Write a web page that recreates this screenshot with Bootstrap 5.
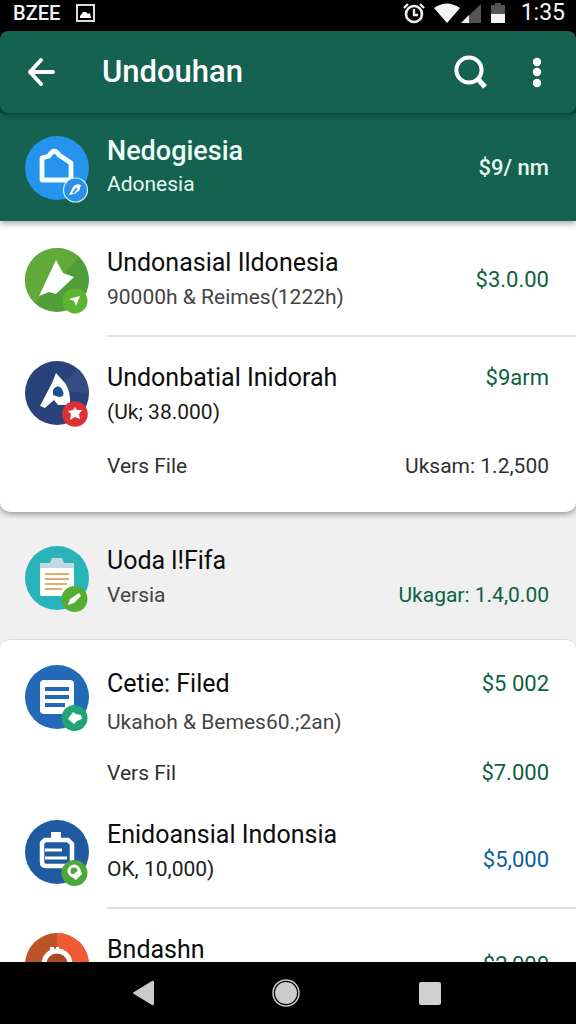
<!DOCTYPE html>
<html lang="id">
<head>
<meta charset="utf-8">
<meta name="viewport" content="width=device-width, initial-scale=1">
<title>Undouhan</title>
<link href="https://cdn.jsdelivr.net/npm/bootstrap@5.3.0/dist/css/bootstrap.min.css" rel="stylesheet">
<script src="https://cdn.jsdelivr.net/npm/bootstrap@5.3.0/dist/js/bootstrap.bundle.min.js" defer></script>
<style>
  body { font-family: Roboto, "Liberation Sans", sans-serif; background: #f0f0f0; color: #0c0c0c; }
  svg { display: block; flex: none; overflow: visible; }
  .screen { height: 100vh; }
  .status-strip { height: 31px; background: #000; color: #f4f4f4; padding: 0 11px 6px 13px; }
  .status-name { font-size: 20px; line-height: 24px; font-weight: 500; }
  .status-time { font-size: 23px; line-height: 24px; }
  .bar-back { background: linear-gradient(#000 50%, #0e4f3f 50%); }
  .app-bar { height: 82px; background: #14624f; border-radius: 8px; color: #fff; padding: 0 23px 0 24px; box-shadow: 0 2px 6px rgba(0, 0, 0, .4); }
  .app-title { font-size: 31px; line-height: 40px; font-weight: 500; margin-left: 44px; }
  .icon-btn { background: none; border: 0; padding: 0; color: #fff; }
  .entry { padding: 25px 27px 21px 25px; gap: 18px; }
  .entry-avatar { width: 64px; height: 64px; }
  .entry-title { font-size: 25px; line-height: 34px; font-weight: 400; margin: 0; }
  .entry-sub { font-size: 21px; line-height: 34px; margin: 0; color: #444; }
  .entry-sub.dark { color: #1c1c1c; }
  .amount { font-size: 22px; line-height: 34px; color: #0b6242; white-space: nowrap; }
  .meta { font-size: 21px; }
  .hero { background: #14624f; color: #effff9; box-shadow: 0 2px 7px rgba(0, 0, 0, .4); z-index: 1; padding-top: 22px; padding-bottom: 20px; }
  .hero .entry-title { font-size: 27px; font-weight: 500; line-height: 32px; }
  .hero .entry-sub, .hero .amount { color: #e4f8f1; }
  .hero .amount { font-weight: 500; }
  .detail { padding: 0 27px 0 107px; font-size: 21px; line-height: 34px; color: #303030; }
  .panel { background: #fff; }
  .panel-a { border-radius: 0 0 10px 10px; box-shadow: 0 2px 6px rgba(0, 0, 0, .4); padding-bottom: 29px; }
  .panel-b { border-radius: 10px 10px 0 0; border-top: 1px solid #d8d8d8; }
  .entry-led { padding-top: 24px; padding-bottom: 20px; }
  .entry-loose { padding-top: 32px; padding-bottom: 27px; }
  .entry-roomy { padding-bottom: 15px; }
  .entry-roomy .entry-title, .entry-roomy .entry-sub, .entry-roomy .amount { line-height: 38px; }
  .entry-after { padding-top: 28px; }
  .split { height: 2px; background: #dfe1e3; margin-left: 107px; }
  .amount.blue { color: #0a6299; }
  .nav-strip { height: 62px; background: #000; padding: 0 132px; }
</style>
</head>
<body>
<div class="screen d-flex flex-column overflow-hidden">
  <div class="status-strip d-flex align-items-center flex-shrink-0">
    <span class="status-name">BZEE</span>
    <svg class="ms-3" width="19" height="18" viewBox="0 0 19 18" aria-hidden="true"><rect x="1" y="1" width="17" height="16" fill="none" stroke="#ddd" stroke-width="2"/><path d="M4 14V12L7 8H10L12 10L14 9L15 14Z" fill="#fff"/></svg>
    <svg class="ms-auto me-3" width="102" height="24" viewBox="0 0 102 24" aria-hidden="true">
      <circle cx="11" cy="13" r="8" fill="none" stroke="#eee" stroke-width="2.6"/><path d="M1 7L5 3M17 3L21 7" stroke="#eee" stroke-width="2.4"/><path d="M11 8V14H15" fill="none" stroke="#eee" stroke-width="2.4"/>
      <path d="M31 7Q44 -2 57 7L44 22Z" fill="#f4f4f4"/>
      <path d="M78 3V22H58Z" fill="#555"/><path d="M66 14V22H58Z" fill="#f4f4f4"/>
      <path d="M88 4H92V2H98V4H102V13H88Z" fill="#555"/><path d="M88 13H102V22H88Z" fill="#f4f4f4"/>
    </svg>
    <time class="status-time">1:35</time>
  </div>

  <div class="bar-back flex-shrink-0 position-relative z-2">
    <header class="app-bar d-flex align-items-center">
      <button class="icon-btn" aria-label="Kembali"><svg width="34" height="30" viewBox="0 0 34 30" fill="none" stroke="currentColor" stroke-width="4" stroke-linecap="round" stroke-linejoin="round"><path d="M17 3L6 15L17 27M6 15H29"/></svg></button>
      <h1 class="app-title mb-0">Undouhan</h1>
      <button class="icon-btn ms-auto" aria-label="Cari"><svg width="36" height="36" viewBox="0 0 36 36" fill="none" stroke="currentColor"><circle cx="16" cy="16" r="12.6" stroke-width="4"/><path d="M24.5 24.5L32 33" stroke-width="5"/></svg></button>
      <button class="icon-btn ms-4" aria-label="Menu"><svg class="ms-2" width="32" height="32" viewBox="0 0 32 32" fill="currentColor"><circle cx="16" cy="6" r="4.2"/><circle cx="16" cy="16" r="4.2"/><circle cx="16" cy="27" r="4.2"/></svg></button>
    </header>
  </div>

  <main class="flex-fill overflow-hidden">
    <section class="entry hero d-flex align-items-center position-relative">
      <svg class="entry-avatar" viewBox="0 0 64 64" aria-hidden="true"><circle cx="32" cy="32" r="32" fill="#2693ed"/><path d="M17 22L24 20Q29 11 34 19L46 27V44H17Z" fill="none" stroke="#f4fff9" stroke-width="4.8" stroke-linejoin="round"/><circle cx="50.500" cy="54" r="12" fill="#2b91e8" stroke="#c9edff" stroke-width="1.200"/><path d="M44 59L48 51Q51 47 56 49L54 55L49 58Z" fill="#fff"/><path d="M48 57L52 52" stroke="#2b91e8" stroke-width="2"/></svg>
      <div class="flex-grow-1"><h2 class="entry-title">Nedogiesia</h2><p class="entry-sub">Adonesia</p></div>
      <span class="amount">$9/ nm</span>
    </section>

    <section class="panel panel-a">
      <article class="entry d-flex align-items-center">
        <svg class="entry-avatar" viewBox="0 0 64 64" aria-hidden="true"><circle cx="32" cy="32" r="32" fill="#4f9e3a"/><path d="M0 32A32 32 0 0 1 54 9L10 55A32 32 0 0 1 0 32Z" fill="#62aa3b"/><path d="M31 12L38 25L49 29L31 46L24 44L14 48Z" fill="#fff"/><circle cx="50" cy="53" r="12.500" fill="#5db432"/><path d="M44 51L55 48L51 58L49 53Z" fill="#fff"/></svg>
        <div class="flex-grow-1"><h2 class="entry-title">Undonasial Ildonesia</h2><p class="entry-sub">90000h &amp; Reimes(1222h)</p></div>
        <span class="amount">$3.0.00</span>
      </article>
      <div class="split"></div>
      <article class="entry entry-led d-flex align-items-start">
        <svg class="entry-avatar" viewBox="0 0 64 64" aria-hidden="true"><circle cx="32" cy="32" r="32" fill="#29427a"/><path d="M30 30L52 9A32 32 0 0 1 64 32Z" fill="#344d82"/><path d="M31 12L40 22Q46 31 45 44H33L29 39L20 47L15 45L27 22Z" fill="#fff"/><path d="M28 29Q33 22 37 28Q41 36 34 36L28 34Z" fill="#17549a"/><circle cx="50" cy="53" r="12.800" fill="#de3035"/><path d="M50 46L52 49L57 49L54 53L55 58L50 56L45 59L46 53L43 50L48 49Z" fill="#fff"/></svg>
        <div class="flex-grow-1"><h2 class="entry-title">Undonbatial Inidorah</h2><p class="entry-sub dark">(Uk; 38.000)</p></div>
        <span class="amount">$9arm</span>
      </article>
      <div class="detail d-flex justify-content-between"><span>Vers File</span><span>Uksam: 1.2,500</span></div>
    </section>

    <article class="entry entry-loose d-flex align-items-center">
      <svg class="entry-avatar" viewBox="0 0 64 64" aria-hidden="true"><circle cx="32" cy="32" r="32" fill="#29b4bb"/><rect x="15" y="18" width="34" height="32" rx="2" fill="#fff"/><path d="M15 22V17H25L27 12H37L39 17H49V22Z" fill="#c2d9df"/><path d="M20 28H44M20 33H44M20 38H42M20 43H37" stroke="#e1ac6b" stroke-width="2"/><circle cx="49.500" cy="53" r="13" fill="#55ad32"/><path d="M43 59L45 53L54 47L56 50L49 57Z" fill="#fff"/></svg>
      <div class="flex-grow-1"><h2 class="entry-title">Uoda l!Fifa</h2><p class="entry-sub">Versia</p></div>
      <span class="amount meta align-self-end">Ukagar: 1.4,0.00</span>
    </article>

    <section class="panel panel-b">
      <article class="entry entry-roomy d-flex align-items-start">
        <svg class="entry-avatar" viewBox="0 0 64 64" aria-hidden="true"><circle cx="32" cy="32" r="32" fill="#2469b8"/><rect x="15" y="15" width="34" height="34" rx="4" fill="#fff"/><path d="M20 24H44M20 32H44M20 40H40" stroke="#2469b8" stroke-width="4"/><circle cx="49.500" cy="53" r="13" fill="#21a476"/><path d="M43 54L48 47L51 49L56 50L57 54L52 56L49 59Z" fill="#fff"/></svg>
        <div class="flex-grow-1"><h2 class="entry-title">Cetie: Filed</h2><p class="entry-sub">Ukahoh &amp; Bemes60.;2an)</p></div>
        <span class="amount">$5 002</span>
      </article>
      <div class="detail d-flex justify-content-between"><span>Vers Fil</span><span class="amount">$7.000</span></div>
      <article class="entry entry-after d-flex align-items-center">
        <svg class="entry-avatar" viewBox="0 0 64 64" aria-hidden="true"><circle cx="32" cy="32" r="32" fill="#205ba2"/><path d="M26 12H36V19H26Z" fill="#fff"/><path d="M20 20H43L47 24V42Q47 46 43 46H21Q17 46 17 42V23Z" fill="none" stroke="#fff" stroke-width="4.500"/><path d="M20 30H37M20 38H42" stroke="#fff" stroke-width="3"/><circle cx="49.500" cy="53" r="13" fill="#4da83a"/><circle cx="49" cy="51" r="5" fill="none" stroke="#fff" stroke-width="3"/><path d="M46 56L51 60L57 54L55 49Z" fill="#fff"/></svg>
        <div class="flex-grow-1"><h2 class="entry-title">Enidoansial Indonsia</h2><p class="entry-sub dark">OK, 10,000)</p></div>
        <span class="amount blue pt-3">$5,000</span>
      </article>
      <div class="split"></div>
      <article class="entry entry-led d-flex align-items-start">
        <svg class="entry-avatar" viewBox="0 0 64 64" aria-hidden="true"><circle cx="32" cy="32" r="32" fill="#bd5328"/><path d="M32 0A32 32 0 0 1 32 64Z" fill="#f05a35"/><circle cx="32" cy="31" r="13" fill="#a84a20" stroke="#fff" stroke-width="5"/><path d="M25 18V14H29V16H31V14H34V16H38V19Z" fill="#fff"/></svg>
        <div class="flex-grow-1"><h2 class="entry-title">Bndashn</h2></div>
        <span class="amount align-self-center">$2,000</span>
      </article>
    </section>
  </main>

  <nav class="nav-strip d-flex align-items-center justify-content-between flex-shrink-0" aria-label="Sistem">
    <button class="icon-btn" aria-label="Mundur"><svg width="24" height="28" viewBox="0 0 24 28"><path d="M2 13L20 2Q22 1 22 4V24Q22 27 20 26L2 15Q0 14 2 13Z" fill="#cbcbcb"/></svg></button>
    <button class="icon-btn" aria-label="Beranda"><svg width="28" height="28" viewBox="0 0 28 28"><circle cx="14" cy="14" r="13" fill="none" stroke="#cbcbcb" stroke-width="1.500"/><circle cx="14" cy="14" r="11" fill="#cbcbcb"/></svg></button>
    <button class="icon-btn" aria-label="Terkini"><svg width="28" height="28" viewBox="0 0 28 28"><rect x="3" y="3" width="22" height="23" rx="2" fill="#d0d0d0"/></svg></button>
  </nav>
</div>
</body>
</html>
